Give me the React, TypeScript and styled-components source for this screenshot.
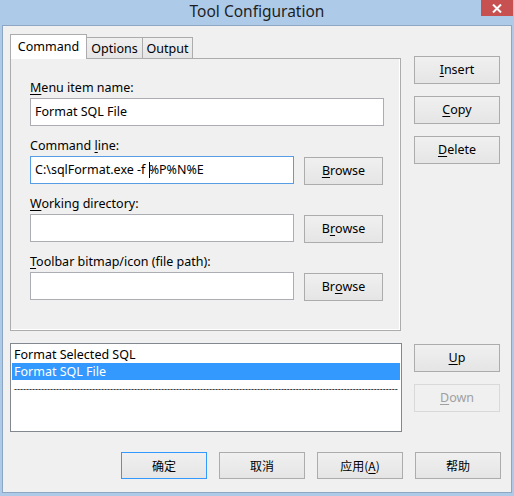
import React from "react";
import styled, { createGlobalStyle } from "styled-components";

const GlobalStyle = createGlobalStyle`
  html, body { margin: 0; padding: 0; }
  body { font-family: "Noto Sans", "Noto Sans CJK SC", sans-serif; font-size: 12.5px; color: #000; }
`;

const Frame = styled.div`
  width: 514px;
  height: 496px;
  background: #adcbe9;
  display: flex;
  flex-direction: column;
  box-sizing: border-box;
`;

const TitleBar = styled.div`
  height: 25px;
  display: grid;
  grid-template-columns: 1fr auto 1fr;
  align-items: start;
`;

const TitleText = styled.div`
  grid-column: 2;
  font-family: "Noto Sans", sans-serif;
  font-size: 15.5px;
  line-height: 21px;
  color: #1e1e1e;
  padding-top: 1px;
`;

const CloseButton = styled.div`
  grid-column: 3;
  justify-self: end;
  width: 32px;
  height: 16px;
  margin-right: 1px;
  background: #c75050;
  display: flex;
  align-items: center;
  justify-content: center;
`;

const Client = styled.div`
  flex: 1;
  margin: 0 2px 3px 2px;
  border: 1px solid #8ea6c1;
  background: #f0f0f0;
  padding: 9px 10px 13px 7px;
  display: flex;
  flex-direction: column;
`;

const TopRow = styled.div`
  display: flex;
  gap: 13px;
`;

const TabArea = styled.div`
  width: 391px;
  display: flex;
  flex-direction: column;
`;

const TabStrip = styled.div`
  display: flex;
  align-items: flex-end;
  height: 24px;
  position: relative;
  z-index: 1;
  margin-bottom: -1px;
`;

const Tab = styled.div<{ $active?: boolean; $w: number }>`
  box-sizing: border-box;
  width: ${(p) => p.$w}px;
  height: ${(p) => (p.$active ? "25px" : "22px")};
  border: 1px solid #acacac;
  border-bottom: ${(p) => (p.$active ? "none" : "1px solid #acacac")};
  margin-left: ${(p) => (p.$active ? "0" : "-1px")};
  background: ${(p) => (p.$active ? "#ffffff" : "linear-gradient(#f0f0f0, #e5e5e5)")};
  line-height: ${(p) => (p.$active ? "23px" : "21px")};
  text-align: center;
  white-space: nowrap;
`;

const Panel = styled.div`
  box-sizing: border-box;
  height: 273px;
  border: 1px solid #acacac;
  box-shadow: inset -1px -1px 0 #ffffff;
  padding: 21px 16px 0 19px;
  display: flex;
  flex-direction: column;
  gap: 11px;
`;

const Field = styled.div<{ $extra?: number }>`
  display: flex;
  flex-direction: column;
  gap: 2px;
  margin-top: ${(p) => p.$extra ?? 0}px;
`;

const Label = styled.div`
  line-height: 16px;
  height: 16px;
  white-space: nowrap;
`;

const Mn = styled.span`
  text-decoration: underline;
  text-underline-offset: 2px;
`;

const InputRow = styled.div`
  display: flex;
  gap: 10px;
  align-items: flex-start;
`;

const TextBox = styled.div<{ $focused?: boolean; $w?: number }>`
  box-sizing: border-box;
  height: 28px;
  width: ${(p) => (p.$w ? `${p.$w}px` : "auto")};
  flex: ${(p) => (p.$w ? "none" : "1")};
  background: #fff;
  border: 1px solid ${(p) => (p.$focused ? "#569de5" : "#abadb3")};
  padding: 0 4px;
  line-height: 26px;
  white-space: nowrap;
  overflow: hidden;
`;

const Caret = styled.span`
  display: inline-block;
  width: 1px;
  height: 16px;
  background: #000;
  vertical-align: -4px;
  margin-right: -1px;
`;

const Button = styled.div<{ $w?: number; $h?: number; $default?: boolean; $disabled?: boolean; $shift?: number }>`
  box-sizing: border-box;
  width: ${(p) => p.$w ?? 86}px;
  height: ${(p) => p.$h ?? 28}px;
  margin-top: ${(p) => p.$shift ?? 0}px;
  flex: none;
  display: flex;
  align-items: center;
  justify-content: center;
  border: 1px solid ${(p) => (p.$default ? "#3399ff" : p.$disabled ? "#d9d9d9" : "#acacac")};
  background: ${(p) => (p.$disabled ? "#f0f0f0" : "linear-gradient(#f0f0f0, #e5e5e5)")};
  color: ${(p) => (p.$disabled ? "#a0a0a0" : "#000")};
  white-space: nowrap;
  padding-bottom: 1px;
`;

const SideColumn = styled.div<{ $top: number }>`
  display: flex;
  flex-direction: column;
  gap: 12px;
  padding-top: ${(p) => p.$top}px;
`;

const ListRow = styled.div`
  display: flex;
  gap: 12px;
  margin-top: 12px;
`;

const ListBox = styled.div`
  box-sizing: border-box;
  width: 392px;
  height: 89px;
  background: #fff;
  border: 1px solid #828790;
  padding: 2px 1px 1px 1px;
  display: flex;
  flex-direction: column;
  overflow: hidden;
`;

const ListItem = styled.div<{ $selected?: boolean }>`
  height: 17px;
  line-height: 17px;
  padding-left: 2px;
  background: ${(p) => (p.$selected ? "#3399ff" : "transparent")};
  color: ${(p) => (p.$selected ? "#fff" : "#000")};
  white-space: nowrap;
  overflow: hidden;
`;

const SeparatorItem = styled(ListItem)`
  font-size: 9.32px;
  line-height: 18px;
  height: 18px;
  width: 384px;
`;

const BottomRow = styled.div`
  display: flex;
  justify-content: flex-end;
  gap: 12px;
  margin-top: auto;
  font-family: "Noto Sans CJK SC", "Noto Sans", sans-serif;
  font-size: 12px;
`;

export default function App() {
  const dashes = "-".repeat(128);
  return (
    <>
      <GlobalStyle />
      <Frame>
        <TitleBar>
          <TitleText>Tool Configuration</TitleText>
          <CloseButton>
            <svg width="10" height="9" viewBox="0 0 10 9">
              <path d="M1 0.5 L9 8.5 M9 0.5 L1 8.5" stroke="#fff" strokeWidth="2" />
            </svg>
          </CloseButton>
        </TitleBar>
        <Client>
          <TopRow>
            <TabArea>
              <TabStrip>
                <Tab $active $w={77}>Command</Tab>
                <Tab $w={57}>Options</Tab>
                <Tab $w={51}>Output</Tab>
              </TabStrip>
              <Panel>
                <Field>
                  <Label>
                    <Mn>M</Mn>enu item name:
                  </Label>
                  <InputRow>
                    <TextBox>Format SQL File</TextBox>
                  </InputRow>
                </Field>
                <Field $extra={1}>
                  <Label>
                    Command <Mn>l</Mn>ine:
                  </Label>
                  <InputRow>
                    <TextBox $focused $w={264}>
                      C:\sqlFormat.exe -f <Caret />%P%N%E
                    </TextBox>
                    <Button $w={79} $shift={1}>
                      <Mn>B</Mn>rowse
                    </Button>
                  </InputRow>
                </Field>
                <Field>
                  <Label>
                    <Mn>W</Mn>orking directory:
                  </Label>
                  <InputRow>
                    <TextBox $w={264} />
                    <Button $w={79} $shift={1}>
                      B<Mn>r</Mn>owse
                    </Button>
                  </InputRow>
                </Field>
                <Field>
                  <Label>
                    <Mn>T</Mn>oolbar bitmap/icon (file path):
                  </Label>
                  <InputRow>
                    <TextBox $w={264} />
                    <Button $w={79} $shift={1}>
                      Br<Mn>o</Mn>wse
                    </Button>
                  </InputRow>
                </Field>
              </Panel>
            </TabArea>
            <SideColumn $top={21}>
              <Button>
                <Mn>I</Mn>nsert
              </Button>
              <Button>
                <Mn>C</Mn>opy
              </Button>
              <Button>
                <Mn>D</Mn>elete
              </Button>
            </SideColumn>
          </TopRow>
          <ListRow>
            <ListBox>
              <ListItem>Format Selected SQL</ListItem>
              <ListItem $selected>Format SQL File</ListItem>
              <SeparatorItem>{dashes}</SeparatorItem>
            </ListBox>
            <SideColumn $top={1}>
              <Button>
                <Mn>U</Mn>p
              </Button>
              <Button $disabled>
                <Mn>D</Mn>own
              </Button>
            </SideColumn>
          </ListRow>
          <BottomRow>
            <Button $h={27} $default>确定</Button>
            <Button $h={27}>取消</Button>
            <Button $h={27}>
              应用(<Mn>A</Mn>)
            </Button>
            <Button $h={27}>帮助</Button>
          </BottomRow>
        </Client>
      </Frame>
    </>
  );
}
